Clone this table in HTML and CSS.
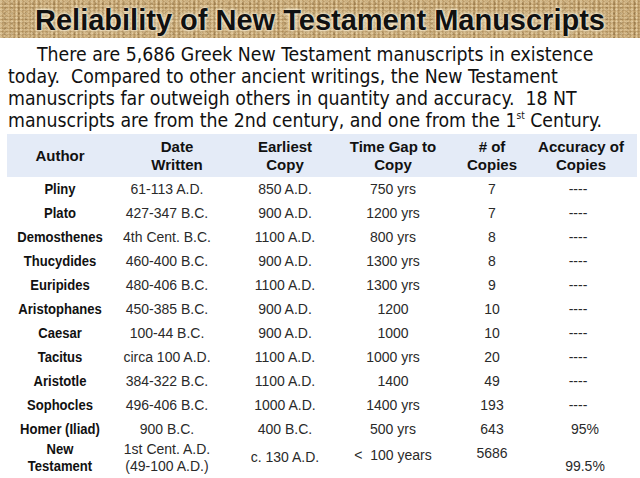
FILE: index.html
```html
<!DOCTYPE html>
<html>
<head>
<meta charset="utf-8">
<link rel="stylesheet" href="styles.css">
</head>
<body>
<header class="banner">
  <h1 class="title">Reliability of New Testament Manuscripts</h1>
</header>
<p class="intro">There are 5,686 Greek New Testament manuscripts in existence<br>today.&nbsp; Compared to other ancient writings, the New Testament<br>manuscripts far outweigh others in quantity and accuracy.&nbsp; 18 NT<br>manuscripts are from the 2nd century, and one from the 1<sup class="sup">st</sup> Century.</p>
<table class="grid">
  <colgroup>
    <col class="c-author"><col class="c-date"><col class="c-copy"><col class="c-gap"><col class="c-num"><col class="c-acc">
  </colgroup>
  <thead>
    <tr class="head">
      <th>Author</th>
      <th class="h-date">Date<br>Written</th>
      <th>Earliest<br>Copy</th>
      <th>Time Gap to<br>Copy</th>
      <th>#&nbsp;of<br>Copies</th>
      <th class="acc">Accuracy of<br>Copies</th>
    </tr>
  </thead>
  <tbody>
    <tr><td class="name">Pliny</td><td class="date">61-113 A.D.</td><td>850 A.D.</td><td>750 yrs</td><td>7</td><td class="acc dash">----</td></tr>
    <tr><td class="name">Plato</td><td class="date">427-347 B.C.</td><td>900 A.D.</td><td>1200 yrs</td><td>7</td><td class="acc dash">----</td></tr>
    <tr><td class="name">Demosthenes</td><td class="date">4th Cent. B.C.</td><td>1100 A.D.</td><td>800 yrs</td><td>8</td><td class="acc dash">----</td></tr>
    <tr><td class="name">Thucydides</td><td class="date">460-400 B.C.</td><td>900 A.D.</td><td>1300 yrs</td><td>8</td><td class="acc dash">----</td></tr>
    <tr><td class="name">Euripides</td><td class="date">480-406 B.C.</td><td>1100 A.D.</td><td>1300 yrs</td><td>9</td><td class="acc dash">----</td></tr>
    <tr><td class="name">Aristophanes</td><td class="date">450-385 B.C.</td><td>900 A.D.</td><td>1200</td><td>10</td><td class="acc dash">----</td></tr>
    <tr><td class="name">Caesar</td><td class="date">100-44 B.C.</td><td>900 A.D.</td><td>1000</td><td>10</td><td class="acc dash">----</td></tr>
    <tr><td class="name">Tacitus</td><td class="date">circa 100 A.D.</td><td>1100 A.D.</td><td>1000 yrs</td><td>20</td><td class="acc dash">----</td></tr>
    <tr><td class="name">Aristotle</td><td class="date">384-322 B.C.</td><td>1100 A.D.</td><td>1400</td><td>49</td><td class="acc dash">----</td></tr>
    <tr><td class="name">Sophocles</td><td class="date">496-406 B.C.</td><td>1000 A.D.</td><td>1400 yrs</td><td>193</td><td class="acc dash">----</td></tr>
    <tr><td class="name">Homer (Iliad)</td><td class="date">900 B.C.</td><td>400 B.C.</td><td>500 yrs</td><td>643</td><td class="acc pct">95%</td></tr>
    <tr class="last">
      <td class="name">New<br>Testament</td>
      <td class="date">1st Cent. A.D.<br>(49-100 A.D.)</td>
      <td class="l-copy">c. 130 A.D.</td>
      <td class="l-gap">&lt;&nbsp; 100 years</td>
      <td class="l-num">5686</td>
      <td class="acc pct l-acc">99.5%</td>
    </tr>
  </tbody>
</table>
</body>
</html>
```
FILE: styles.css
```css
html, body {
  margin: 0;
  padding: 0;
  background: #ffffff;
  width: 640px;
  height: 478px;
  overflow: hidden;
}

.banner {
  height: 38px;
  background-color: #c9aa78;
  background-image:
    radial-gradient(circle at 30% 40%, rgba(255, 240, 205, 0.35) 0 1px, transparent 1.5px),
    radial-gradient(circle at 70% 70%, rgba(100, 70, 30, 0.3) 0 1px, transparent 1.5px),
    repeating-linear-gradient(0deg, rgba(120, 84, 36, 0.2) 0 1px, transparent 1px 3px),
    repeating-linear-gradient(90deg, rgba(255, 238, 200, 0.25) 0 1px, transparent 1px 2px, rgba(110, 78, 30, 0.16) 2px 3px, transparent 3px 4px);
  background-size: 5px 4px, 7px 5px, auto, auto;
  display: flex;
  justify-content: center;
  align-items: center;
}

.title {
  margin: 2px 0 0 0;
  font-family: "Liberation Sans", Arial, sans-serif;
  font-weight: bold;
  font-size: 29px;
  line-height: 32px;
  color: #111;
  text-shadow: 0 0 2px #f6eed8, 0 0 3px #f6eed8, 0 0 5px #efe4c6;
}

.intro {
  margin: 6px 0 0 0;
  padding-left: 8px;
  text-indent: 29px;
  font-family: "DejaVu Sans Condensed", "DejaVu Sans", sans-serif;
  font-stretch: condensed;
  font-size: 19.3px;
  line-height: 22px;
  color: #111;
  white-space: nowrap;
}

.sup {
  font-size: 10px;
  vertical-align: 8px;
  line-height: 0;
}

.grid {
  margin: 2px 0 0 7px;
  width: 630px;
  table-layout: fixed;
  border-collapse: collapse;
  font-family: "Liberation Sans", Arial, sans-serif;
  color: #2a2a2a;
}

.c-author { width: 106px; }
.c-date { width: 118px; }
.c-copy { width: 108px; }
.c-gap { width: 108px; }
.c-num { width: 90px; }
.c-acc { width: 100px; }

.grid th, .grid td {
  padding: 0;
  text-align: center;
  white-space: nowrap;
}

.head {
  background: #e4ebf7;
  height: 43px;
}

.head th {
  font-size: 15px;
  line-height: 18px;
  font-weight: bold;
  color: #111;
  vertical-align: middle;
  padding-top: 1px;
}

.head .h-date {
  padding-left: 10px;
}

.grid td {
  font-size: 14px;
  line-height: 15px;
  height: 24px;
  vertical-align: middle;
}

.grid td.name {
  font-weight: bold;
  font-size: 14.5px;
  color: #111;
  transform: scaleX(0.9);
}

.grid td.date {
  padding-right: 10px;
}

.grid .acc {
  padding-right: 12px;
}

.grid td.dash {
  padding-right: 18px;
}

.grid td.pct {
  padding-right: 4px;
}

.last td {
  height: 37px;
  vertical-align: top;
  line-height: 17px;
  padding-top: 0;
}

.last td.l-copy { padding-top: 8px; }
.last td.l-gap { padding-top: 6px; }
.last td.l-num { padding-top: 4px; }
.last td.l-acc { padding-top: 17px; }
```
